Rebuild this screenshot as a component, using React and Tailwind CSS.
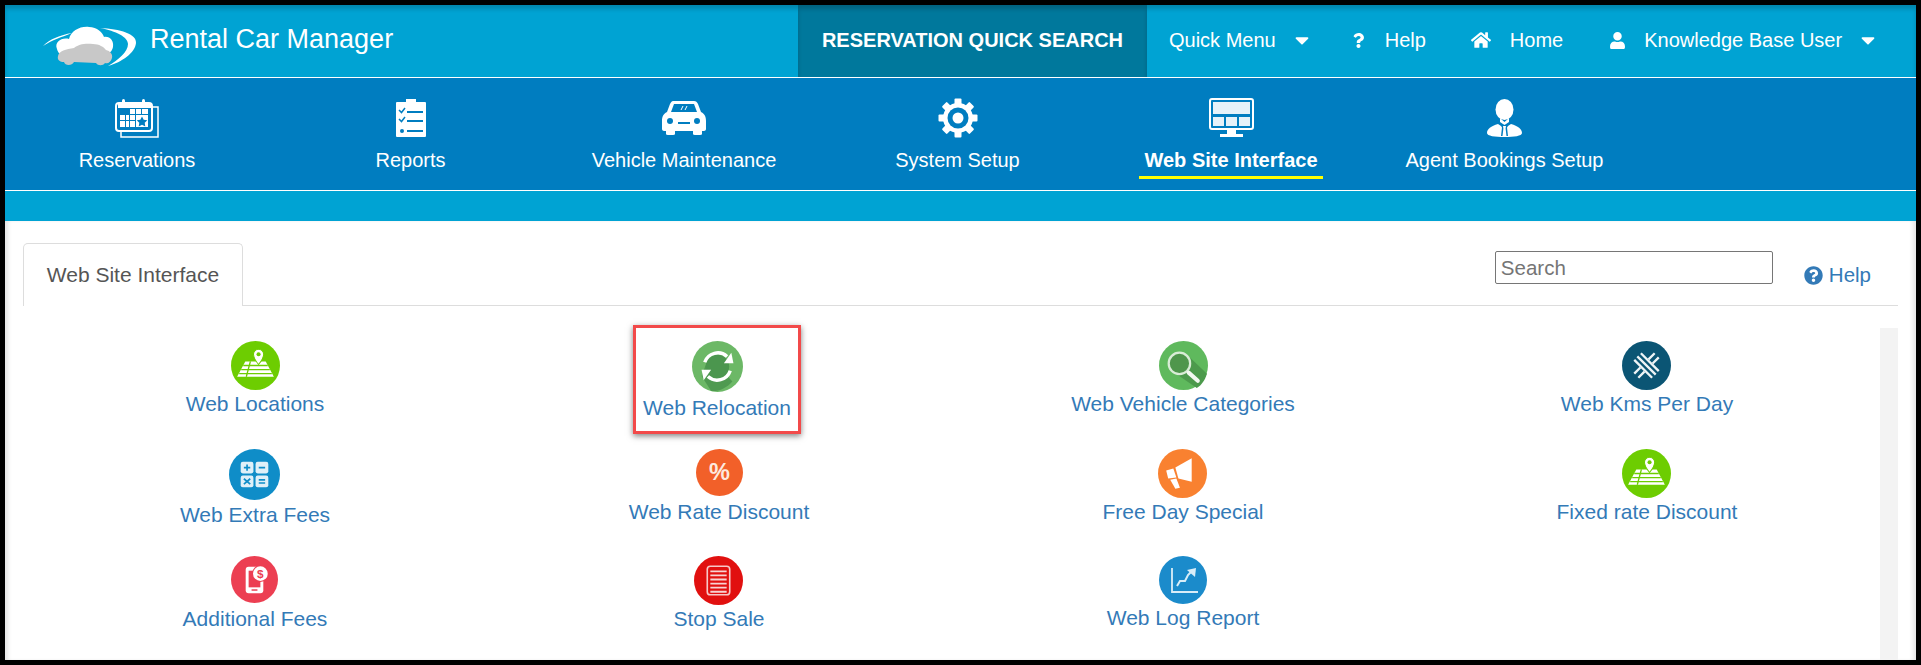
import { FaCaretDown, FaHome, FaQuestion, FaQuestionCircle, FaUser } from 'react-icons/fa'

function Logo() {
  return (
    <svg width="105" height="50" viewBox="0 0 105 50" className="shrink-0 mt-[12px]">
      <path d="M5 24C12 17 22 13 34 11C24 15 14 18 5 24Z" fill="#fff" />
      <path d="M62 6C82 7 99 12 98 21C97 31 84 40 70 44C80 38 90 30 90 22C90 15 78 9 62 6Z" fill="#fff" />
      <path d="M19 27C16 20 24 15 31 17C33 9 42 4 51 5C59 5 65 11 66 15C72 14 76 19 75 25C74 31 68 34 60 34H26C23 34 20 31 19 27Z" fill="#fff" />
      <path d="M20 34C21 29 28 27 36 26C40 22 48 21 55 22C61 22 66 25 68 28C72 29 75 32 74 36C73 40 70 42 67 41C65 44 60 44 58 41L36 40C34 44 27 44 26 40C22 40 19 38 20 34Z" fill="#c8c8c8" />
    </svg>
  )
}

function CalendarIcon() {
  return (
    <svg width="44" height="40" viewBox="0 0 44 40" fill="#fff">
      <path d="M38 9H43V39H6V33" fill="none" stroke="#fff" strokeWidth="1.500" />
      <rect x="1" y="5" width="36" height="28" rx="3" fill="none" stroke="#fff" strokeWidth="2" />
      <path d="M3 5H36V10H3Z" />
      <rect x="7" y="1" width="3" height="6" rx="1.500" />
      <rect x="27" y="1" width="3" height="6" rx="1.500" />
      <path d="M15 11h5v5h-5zM21 11h5v5h-5zM27 11h6v5h-6zM5 17h5v5H5zM15 17h5v5h-5zM11 17h3v5h-3zM5 23h5v6H5zM11 23h3v6h-3zM15 23h5v6h-5zM21 17h12v12H21z" />
      <path d="M27 18.500l1.700 3.300 3.600.500-2.600 2.500.600 3.600-3.300-1.700-3.300 1.700.600-3.600-2.600-2.500 3.600-.500z" fill="#007dc0" />
    </svg>
  )
}

function ClipboardIcon() {
  return (
    <svg width="30" height="38" viewBox="0 0 30 38">
      <path d="M1 3H10V0H20V3H29A1 1 0 0 1 30 4V37A1 1 0 0 1 29 38H1A1 1 0 0 1 0 37V4A1 1 0 0 1 1 3Z" fill="#fff" />
      <g stroke="#007dc0" strokeWidth="1.500" fill="none">
        <path d="M3 11l2.500 2.500L9 9M3 20l2.500 2.500L9 18" />
        <path d="M11 13h16M11 22h16M11 32h16" strokeWidth="2" />
      </g>
      <circle cx="6" cy="32" r="2" fill="#007dc0" />
    </svg>
  )
}

function CarIcon() {
  return (
    <svg width="46" height="34" viewBox="0 0 46 34" fill="#fff">
      <path d="M12 0H33C35 0 36 1 37 3L40 11C44 13 45 16 45 20V28C45 29 44 30 43 30H41V33Q41 34 39 34H34Q32 34 32 33V30H14V33Q14 34 12 34H7Q5 34 5 33V30H3C2 30 1 29 1 28V20C1 16 2 13 6 11L9 3C10 1 11 0 12 0Z" />
      <path d="M13 3H33L36 11H10Z" fill="#007dc0" />
      <path d="M20 9L22 5M24 9L26 5" stroke="#fff" strokeWidth="1" />
      <circle cx="9" cy="20" r="3" fill="#007dc0" />
      <circle cx="36" cy="20" r="3" fill="#007dc0" />
      <path d="M17 21H29V23H17Z" fill="#007dc0" />
    </svg>
  )
}

function GearIcon() {
  const teeth = [0, 45, 90, 135, 180, 225, 270, 315]
  return (
    <svg width="40" height="40" viewBox="0 0 40 40">
      <g transform="translate(20 20)">
        {teeth.map(a => (
          <rect key={a} x="-3.500" y="-19.500" width="7" height="8" rx="1" fill="#fff" transform={`rotate(${a})`} />
        ))}
        <circle r="15" fill="#fff" />
        <circle r="10.500" fill="#007dc0" />
        <circle r="5.500" fill="#fff" />
      </g>
    </svg>
  )
}

function MonitorIcon() {
  return (
    <svg width="45" height="40" viewBox="0 0 45 40" fill="#fff">
      <rect x="1" y="1" width="43" height="30" rx="2" fill="none" stroke="#fff" strokeWidth="2" />
      <path d="M4 4H41V16H4Z" opacity=".9" />
      <path d="M4 19H15V28H4ZM17 19H28V28H17ZM30 19H41V28H30Z" opacity=".9" />
      <path d="M18 32H27V36H18ZM11 36H34V39H11Z" />
    </svg>
  )
}

function AgentIcon() {
  return (
    <svg width="35" height="38" viewBox="0 0 35 38" fill="#fff">
      <ellipse cx="17.500" cy="10.500" rx="9" ry="10.500" />
      <path d="M13 19L17.500 23 22 19V23L17.500 26 13 23Z" />
      <path d="M11 25C4 27 0 30 0 34C0 37 8 38 17.500 38C27 38 35 37 35 34C35 30 31 27 24 25L21 27 20 28.500 21 37H14L15 28.500 14 27Z" />
      <path d="M16 27H19L18.600 29.500 19.500 37H15.500L16.400 29.500Z" />
    </svg>
  )
}

function RoundIcon({ bg, size = 49, children }) {
  return (
    <svg width={size} height={size} viewBox="0 0 48 48" className="shrink-0">
      <circle cx="24" cy="24" r="24" fill={bg} />
      {children}
    </svg>
  )
}

const IconMap = ({ size }) => (
  <RoundIcon bg="#6dcd01" size={size}>
    <path d="M6 35L14 20H34L42 35Z" fill="#fff" />
    <path d="M12 24H36M10 28H38M8 32H40M19 20L15 35" stroke="#6dcd01" strokeWidth="1.300" fill="none" />
    <path d="M27 8a5 5 0 0 1 5 5C32 17 27 23 27 23s-5-6-5-10a5 5 0 0 1 5-5z" fill="#fff" stroke="#6dcd01" strokeWidth="1" />
    <circle cx="27" cy="13" r="2" fill="#6dcd01" />
  </RoundIcon>
)

const IconRelocation = ({ size }) => (
  <RoundIcon bg="#6cb866" size={size}>
    <path d="M9 33L16 14 38 38C33 44 24 48 18 47Z" fill="#4f9a50" />
    <circle cx="24" cy="24" r="11" fill="#4b964e" />
    <path d="M12 20A13 13 0 0 1 33 14.500" stroke="#fff" strokeWidth="3.200" fill="none" />
    <path d="M36 28A13 13 0 0 1 15 33.500" stroke="#fff" strokeWidth="3.200" fill="none" />
    <path d="M30 21L39 21 37 11Z" fill="#fff" />
    <path d="M18 27L9 27 11 37Z" fill="#fff" />
  </RoundIcon>
)

const IconSearch = ({ size }) => (
  <RoundIcon bg="#5fb95d" size={size}>
    <path d="M12 29L27 13 47 32C45 38 42 43 37 46Z" fill="#4c9a4c" />
    <circle cx="20" cy="22" r="10.500" fill="#4f964c" stroke="#d9ecd6" strokeWidth="2.200" />
    <path d="M29 31L38 39" stroke="#f2f8f0" strokeWidth="4" strokeLinecap="round" />
  </RoundIcon>
)

const IconKms = ({ size }) => (
  <RoundIcon bg="#0b5574" size={size}>
    <path d="M15 15L33 33M18.500 12L36 29.500M12 18.500L29.500 36" stroke="#eef4f6" strokeWidth="2.300" fill="none" />
    <path d="M26 18L32 12M30 22L36 16M12 32L18 26M16 36L22 30" stroke="#eef4f6" strokeWidth="2.300" fill="none" />
  </RoundIcon>
)

const IconCalc = ({ size }) => (
  <RoundIcon bg="#0f8dc8" size={size}>
    <g fill="#dff0f8">
      <rect x="11" y="12" width="12" height="11" rx="2" />
      <rect x="25" y="12" width="12" height="11" rx="2" />
      <rect x="11" y="25" width="12" height="11" rx="2" />
      <rect x="25" y="25" width="12" height="11" rx="2" />
    </g>
    <path d="M14 17.500h6M17 14.500v6M28 17.500h6M14 28l6 5M20 28l-6 5M28 29h6M28 32h6" stroke="#0f8dc8" strokeWidth="1.600" />
  </RoundIcon>
)

const IconPhone = ({ size }) => (
  <RoundIcon bg="#ec3f52" size={size}>
    <rect x="15" y="11" width="18" height="27" rx="3" fill="#fff" />
    <rect x="18" y="15" width="12" height="17" fill="#ec3f52" />
    <rect x="21" y="34" width="6" height="1.500" fill="#ec3f52" />
    <circle cx="30" cy="18" r="8.500" fill="#ec3f52" />
    <circle cx="30" cy="18" r="7.500" fill="#fff" />
    <text x="30" y="22" fontSize="12" fontWeight="700" textAnchor="middle" fill="#ec3f52" fontFamily="'Liberation Sans', sans-serif">$</text>
  </RoundIcon>
)

const IconPercent = ({ size }) => (
  <RoundIcon bg="#f26029" size={size}>
    <text x="24" y="32" fontSize="24" fontWeight="700" textAnchor="middle" fill="#fde9df" fontFamily="'Liberation Sans', sans-serif">%</text>
  </RoundIcon>
)

const IconMegaphone = ({ size }) => (
  <RoundIcon bg="#f98130" size={size}>
    <path d="M17 18L33 9V32L20 29Z" fill="#fff" />
    <path d="M8 21L15 19 18 28 10 29Z" fill="#fff" />
    <path d="M12 30L18 29 21.500 38 17 39Z" fill="#fff" />
  </RoundIcon>
)

const IconStop = ({ size }) => (
  <RoundIcon bg="#e1100f" size={size}>
    <rect x="13" y="10" width="22" height="28" rx="3" fill="none" stroke="#f7c7c7" strokeWidth="1.600" />
    <path d="M16 15h16M16 19h16M16 23h16M16 27h16M16 31h16M16 35h16" stroke="#f7d3d3" strokeWidth="1.800" />
  </RoundIcon>
)

const IconChart = ({ size }) => (
  <RoundIcon bg="#1b8bcb" size={size}>
    <path d="M13 12V36H39" stroke="#d9edf8" strokeWidth="1.800" fill="none" />
    <path d="M18 30L21 25H26L29 19 33 15" stroke="#d9edf8" strokeWidth="2" fill="none" />
    <path d="M28 14L37 12 36 21Z" fill="#d9edf8" />
  </RoundIcon>
)

const menus = [
  { label: 'Reservations', icon: CalendarIcon },
  { label: 'Reports', icon: ClipboardIcon },
  { label: 'Vehicle Maintenance', icon: CarIcon },
  { label: 'System Setup', icon: GearIcon },
  { label: 'Web Site Interface', icon: MonitorIcon, active: true },
  { label: 'Agent Bookings Setup', icon: AgentIcon },
]

const links = [
  { label: 'Web Locations', icon: IconMap },
  { label: 'Web Relocation', icon: IconRelocation, size: 51, marked: true },
  { label: 'Web Vehicle Categories', icon: IconSearch },
  { label: 'Web Kms Per Day', icon: IconKms },
  { label: 'Web Extra Fees', icon: IconCalc, size: 51, gap: 'mt-[1px]' },
  { label: 'Web Rate Discount', icon: IconPercent, size: 47, gap: 'mt-[2px]' },
  { label: 'Free Day Special', icon: IconMegaphone },
  { label: 'Fixed rate Discount', icon: IconMap },
  { label: 'Additional Fees', icon: IconPhone, size: 47, gap: 'mt-[2px]' },
  { label: 'Stop Sale', icon: IconStop },
  { label: 'Web Log Report', icon: IconChart, size: 48 },
]

export default function App() {
  return (
    <div className="w-[1921px] h-[665px] bg-black p-[5px] font-['Liberation_Sans',Arial,sans-serif] overflow-hidden">
      <div className="h-full flex flex-col bg-white">

        <header className="h-[73px] shrink-0 flex bg-[#00a3d3] border-b border-white text-white text-[20px] shadow-[inset_0_4px_4px_rgba(0,0,0,0.18)]">
          <div className="flex items-center pl-[33px] w-[793px]">
            <Logo />
            <span className="ml-[7px] mb-[4px] text-[27px]">Rental Car Manager</span>
          </div>
          <div className="w-[349px] pb-[3px] flex items-center justify-center bg-[#00789c] font-bold shadow-[inset_0_4px_4px_rgba(0,0,0,0.18)]">
            RESERVATION QUICK SEARCH
          </div>
          <div className="flex items-center ml-[22px] pb-[2px]">
            <span>Quick Menu</span>
            <FaCaretDown className="ml-[15px] text-[22px]" />
            <FaQuestion className="ml-[38px] text-[15px]" />
            <span className="ml-[19px]">Help</span>
            <FaHome className="ml-[45px] text-[20px]" />
            <span className="ml-[19px]">Home</span>
            <FaUser className="ml-[46px] text-[17px]" />
            <span className="ml-[18px]">Knowledge Base User</span>
            <FaCaretDown className="ml-[15px] text-[22px]" />
          </div>
        </header>

        <nav className="h-[113px] shrink-0 flex gap-[9.500px] bg-[#007dc0] border-b border-white text-white text-[20px]">
          {menus.map(m => (
            <div key={m.label} className="w-[264px] flex flex-col items-center">
              <div className="h-[41px] mt-[19px] flex items-center justify-center">
                <m.icon />
              </div>
              <span className={`mt-[9px] px-[5px] pb-[3px] border-b-[3px] leading-[26px] ${m.active ? 'font-bold border-[#ffff00]' : 'border-transparent'}`}>
                {m.label}
              </span>
            </div>
          ))}
        </nav>

        <div className="h-[30px] shrink-0 bg-[#00a3d3]"></div>

        <main className="flex-1 min-h-0 flex flex-col shadow-[inset_5px_0_4px_-2px_rgba(0,0,0,0.1),inset_-5px_0_4px_-2px_rgba(0,0,0,0.1)]">
          <div className="h-[64px] mt-[21px] shrink-0 mx-[18px] pr-[27px] flex items-end justify-between border-b border-[#dddddd]">
            <div className="h-[63px] w-[220px] mb-[-1px] flex items-center justify-center bg-white border border-b-0 border-[#dddddd] rounded-t-[5px] text-[21px] text-[#555555]">
              Web Site Interface
            </div>
            <div className="self-start flex items-start mt-[9px]">
              <input
                placeholder="Search"
                className="w-[278px] h-[33px] px-[5px] border border-[#767676] rounded-[2px] text-[20.500px] placeholder:text-[#757575]"
              />
              <a className="ml-[31px] mt-[11px] flex items-center gap-[6px] text-[20.500px] leading-[26px] text-[#337ab7]">
                <FaQuestionCircle className="text-[19px]" />
                Help
              </a>
            </div>
          </div>

          <div className="flex-1 min-h-0 flex pl-[18px] mt-[22px]">
            <div className="w-[1856px] grid grid-cols-4 content-start auto-rows-[107.500px]">
              {links.map(l => (
                <div key={l.label} className="flex justify-center">
                  <a className={`h-fit flex flex-col items-center text-[21px] leading-[28px] text-[#337ab7] ${l.marked ? 'mt-[-3px] mr-[4px] px-[7px] pb-[9px] pt-[13px] border-[3px] border-[#f24a4a] shadow-[0_2px_6px_rgba(0,0,0,0.5)]' : 'pt-[13px]'}`}>
                    <l.icon size={l.size} />
                    <span className={l.marked ? 'mt-[2px]' : l.gap}>{l.label}</span>
                  </a>
                </div>
              ))}
            </div>
            <div className="ml-[1px] w-[18px] bg-[#f3f3f3]"></div>
          </div>
        </main>

      </div>
    </div>
  )
}
